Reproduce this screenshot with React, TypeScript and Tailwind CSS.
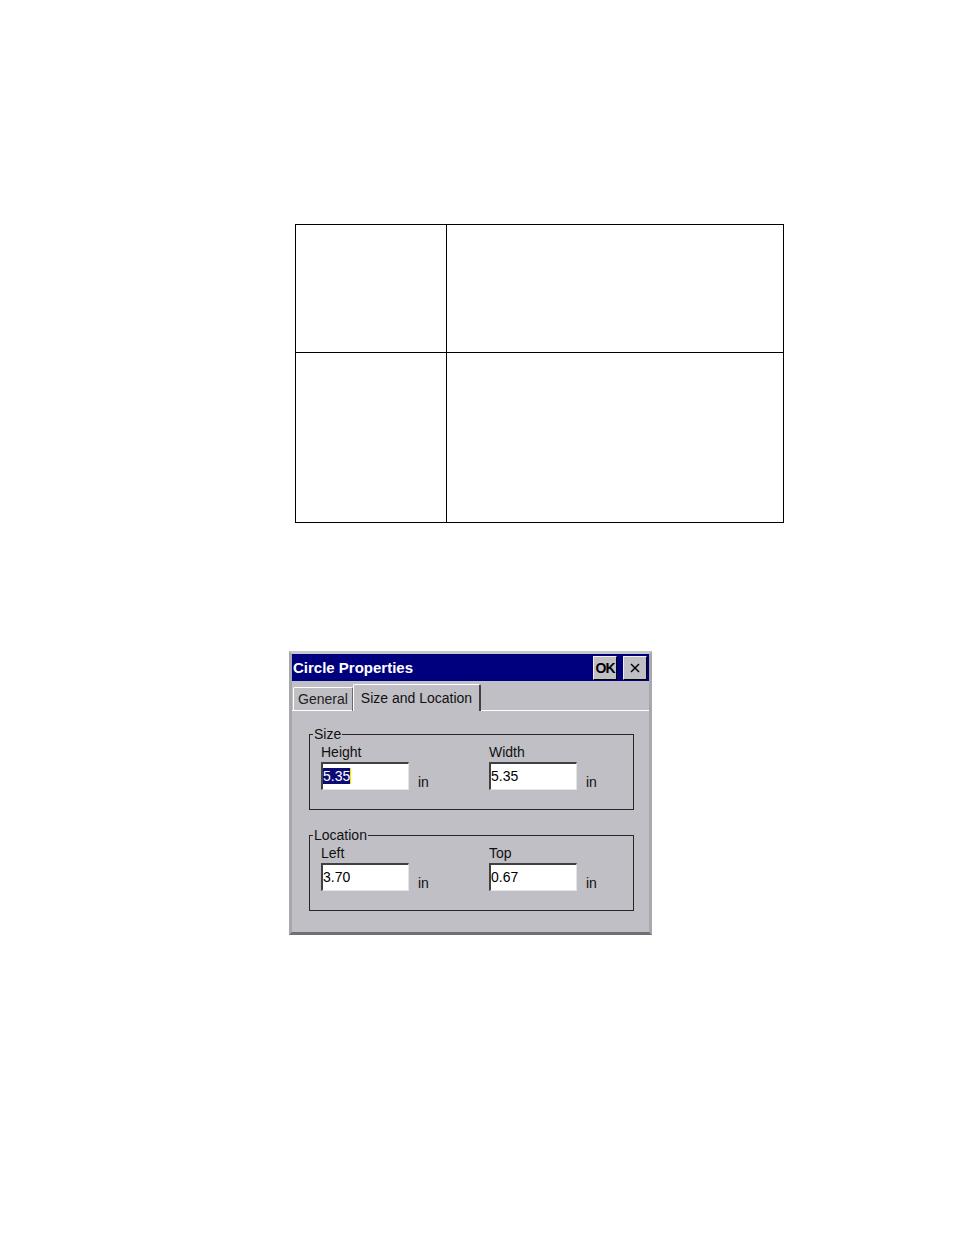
import React from "react";

const ui = "font-['Liberation_Sans',Arial,sans-serif]";

function Field({
  label,
  value,
  selected,
}: {
  label: string;
  value: string;
  selected?: boolean;
}) {
  return (
    <div className="flex flex-col">
      <span className="h-[16px] text-[14px] leading-[16px] text-[#111]">{label}</span>
      <div className="mt-[2px] flex items-end">
        <div className="h-[28px] w-[88px] border-t-2 border-l-2 border-r border-b border-t-[#404040] border-l-[#404040] border-r-[#e4e4e4] border-b-[#e4e4e4] bg-white">
          {selected ? (
            <span className="border-r border-r-[#e8e800] bg-[#0b0b73] text-[14px] leading-[16px] text-white">
              {value}
            </span>
          ) : (
            <span className="text-[14px] leading-[16px] text-black">{value}</span>
          )}
        </div>
        <span className="ml-[9px] text-[14px] leading-[16px] text-[#111]">in</span>
      </div>
    </div>
  );
}

function Group({ title, children }: { title: string; children: React.ReactNode }) {
  return (
    <fieldset className="mx-[1px] border border-[#262626] pl-[3px] pb-[19px]">
      <legend className="px-[1px] text-[14px] leading-[16px] text-[#111]">{title}</legend>
      <div className="grid grid-cols-[168px_1fr] pl-[8px] pt-[2px]">{children}</div>
    </fieldset>
  );
}

function TitleButton({ children }: { children: React.ReactNode }) {
  return (
    <div className="flex h-[24px] w-[24px] items-center justify-center border border-t-[#f0f0f0] border-l-[#f0f0f0] border-r-black border-b-black bg-[#c0bfc5] text-black">
      {children}
    </div>
  );
}

export default function App() {
  return (
    <div className={`min-h-[1235px] w-[954px] bg-white ${ui}`}>
      <div className="h-[224px]" />

      {/* empty table */}
      <div className="ml-[295px] grid h-[299px] w-[489px] grid-cols-[151px_1fr] grid-rows-[128px_1fr] border border-black">
        <div className="border-r border-b border-black" />
        <div className="border-b border-black" />
        <div className="border-r border-black" />
        <div />
      </div>

      <div className="h-[128px]" />

      {/* dialog */}
      <div className="ml-[289px] flex h-[284px] w-[363px] flex-col border-[3px] border-t-[#c8c8cc] border-l-[#a8a8ac] border-r-[#a8a8ac] border-b-[#707070] bg-[#c0bfc5]">
        <div className="flex h-[27px] items-center justify-between bg-[#00007f] pl-[1px] pr-[2px]">
          <span className="text-[15px] font-bold leading-none text-white">Circle Properties</span>
          <div className="flex gap-[6px]">
            <TitleButton>
              <span className="text-[14px] font-bold leading-none tracking-[-1px]">OK</span>
            </TitleButton>
            <TitleButton>
              <svg width="12" height="12" viewBox="0 0 12 12" stroke="black" strokeWidth="1.4">
                <line x1="2" y1="2" x2="10" y2="10" />
                <line x1="10" y1="2" x2="2" y2="10" />
              </svg>
            </TitleButton>
          </div>
        </div>

        {/* tabs */}
        <div className="mt-[3px] flex items-end border-b border-b-white pl-[1px]">
          <div className="mb-[-1px] flex h-[24px] items-center rounded-t-[2px] border-t border-l border-r border-t-white border-l-white border-r-[#6a6a6a] px-[4px] text-[14px] text-[#222]">
            General
          </div>
          <div className="mb-[-1px] flex h-[27px] items-center rounded-t-[2px] border-t border-l border-r-2 border-t-white border-l-white border-r-[#404040] bg-[#c0bfc5] px-[7px] text-[14px] text-[#111]">
            Size and Location
          </div>
        </div>

        <div className="flex flex-col gap-[17px] pl-[16px] pr-[14px] pt-[15px]">
          <Group title="Size">
            <Field label="Height" value="5.35" selected />
            <Field label="Width" value="5.35" />
          </Group>
          <Group title="Location">
            <Field label="Left" value="3.70" />
            <Field label="Top" value="0.67" />
          </Group>
        </div>
      </div>
    </div>
  );
}
